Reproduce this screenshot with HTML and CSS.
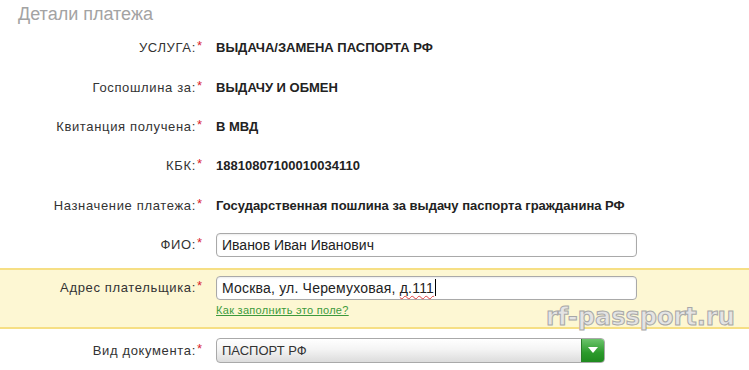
FILE: index.html
```html
<!DOCTYPE html>
<html lang="ru">
<head>
    <meta charset="UTF-8">
    <meta name="viewport" content="width=device-width, initial-scale=1.0">
    <title>Детали платежа</title>
    <link rel="stylesheet" href="styles.css">
</head>
<body>
    <div class="page">
        <h2 class="title">Детали платежа</h2>

        <div class="row">
            <div class="label">УСЛУГА:<span class="req">*</span></div>
            <div class="value">ВЫДАЧА/ЗАМЕНА ПАСПОРТА РФ</div>
        </div>
        <div class="row">
            <div class="label">Госпошлина за:<span class="req">*</span></div>
            <div class="value">ВЫДАЧУ И ОБМЕН</div>
        </div>
        <div class="row">
            <div class="label">Квитанция получена:<span class="req">*</span></div>
            <div class="value">В МВД</div>
        </div>
        <div class="row">
            <div class="label">КБК:<span class="req">*</span></div>
            <div class="value">18810807100010034110</div>
        </div>
        <div class="row">
            <div class="label">Назначение платежа:<span class="req">*</span></div>
            <div class="value">Государственная пошлина за выдачу паспорта гражданина РФ</div>
        </div>
        <div class="row">
            <div class="label">ФИО:<span class="req">*</span></div>
            <div class="control">
                <input class="field" type="text" value="Иванов Иван Иванович">
            </div>
        </div>

        <div class="active-band">
            <div class="row row-active">
                <div class="label">Адрес плательщика:<span class="req">*</span></div>
                <div class="control">
                    <div class="field field-addr">Москва, ул. Черемуховая, <span class="typo">д.111</span><span class="caret"></span></div>
                    <a class="hint" href="#">Как заполнить это поле?</a>
                </div>
            </div>
        </div>

        <div class="row row-last">
            <div class="label">Вид документа:<span class="req">*</span></div>
            <div class="control">
                <div class="select">
                    <span class="select-text">ПАСПОРТ РФ</span>
                    <span class="select-btn">
                        <svg width="10" height="6" viewBox="0 0 10 6"><path d="M0 0 L10 0 L5 6 Z" fill="#fff"/></svg>
                    </span>
                </div>
            </div>
        </div>

        <div class="watermark">rf-passport.ru</div>
    </div>
</body>
</html>
```

FILE: styles.css
```css
* {
    margin: 0;
    padding: 0;
    box-sizing: border-box;
}

body {
    background: #fff;
    font-family: 'Liberation Sans', Arial, sans-serif;
    font-size: 13px;
    color: #333;
}

.page {
    position: relative;
    width: 749px;
    height: 370px;
    overflow: hidden;
}

.title {
    height: 28px;
    padding: 4px 0 0 18px;
    font-size: 18px;
    font-weight: normal;
    color: #a3a3a3;
}

.row {
    display: grid;
    grid-template-columns: 202px 1fr;
    column-gap: 14px;
    align-items: center;
    height: 39.4px;
}

.label {
    text-align: right;
    color: #333;
    white-space: nowrap;
    letter-spacing: 0.65px;
}

.req {
    color: #d9232d;
    position: relative;
    top: -2px;
    margin-left: 1px;
    letter-spacing: 0;
}

.value {
    font-weight: bold;
    color: #222;
    white-space: nowrap;
}

.field {
    display: block;
    width: 421px;
    height: 24px;
    padding: 0 5px;
    border: 1px solid #a9a9a9;
    border-radius: 4px;
    background: #fff;
    font-family: 'Liberation Sans', Arial, sans-serif;
    font-size: 14px;
    line-height: 22px;
    color: #222;
    box-shadow: inset 0 1px 2px rgba(0,0,0,0.08);
}

.field-addr {
    letter-spacing: 0.2px;
}

.active-band {
    margin-top: 4px;
    height: 61px;
    background: #fdf7d3;
    border-top: 2px solid #f6df84;
    border-bottom: 2px solid #f6df84;
}

.row-active {
    height: auto;
    align-items: start;
    padding-top: 6px;
}

.row-active .label {
    line-height: 24px;
}

.typo {
    text-decoration: underline wavy #e04040;
    text-decoration-thickness: 1px;
    text-underline-offset: 2px;
}

.caret {
    display: inline-block;
    width: 1px;
    height: 17px;
    background: #000;
    vertical-align: -3px;
    margin-left: 1px;
}

.hint {
    display: inline-block;
    margin-top: 4px;
    font-size: 11px;
    letter-spacing: 0.3px;
    color: #3c9a3c;
}

.row-last {
    margin-top: 1px;
}

.select {
    display: flex;
    width: 389px;
    height: 25px;
    border: 1px solid #a9a9a9;
    border-radius: 4px;
    background: linear-gradient(#fff 0%, #f4f4f4 45%, #dcdcdc 100%);
    overflow: hidden;
}

.select-text {
    flex: 1;
    padding-left: 5px;
    line-height: 23px;
    font-size: 13px;
    color: #333;
}

.select-btn {
    width: 23px;
    display: flex;
    align-items: center;
    justify-content: center;
    background: linear-gradient(#6cc46c, #2b9a2b 60%, #1f8a1f);
    border-left: 1px solid #2a7d2a;
}

.watermark {
    position: absolute;
    left: 546px;
    top: 303px;
    white-space: nowrap;
    font-family: 'DejaVu Sans', Verdana, sans-serif;
    font-size: 24px;
    font-weight: bold;
    color: #e4e4e4;
    -webkit-text-stroke: 1px #a8a8a8;
}
```
